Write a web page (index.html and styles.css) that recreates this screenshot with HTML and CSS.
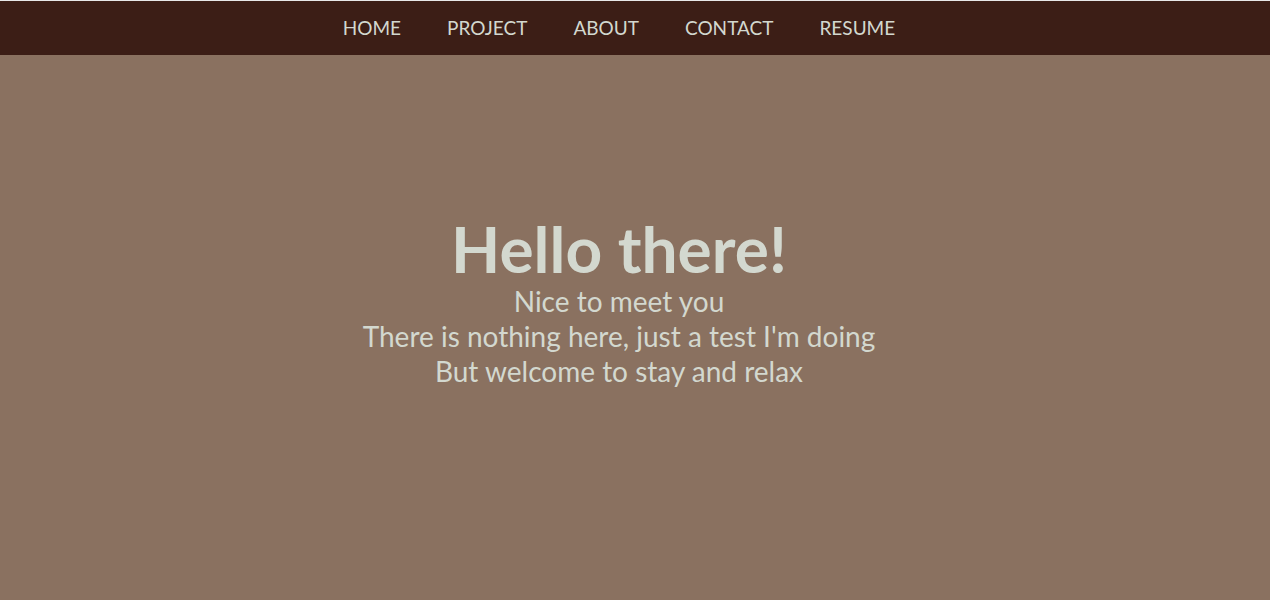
FILE: index.html
```html
<!DOCTYPE html>
<html>
<head>
<meta charset="utf-8">
<link rel="stylesheet" href="styles.css">
</head>
<body>
<nav class="nav">
  <a class="nav-link" href="#">HOME</a>
  <a class="nav-link" href="#">PROJECT</a>
  <a class="nav-link" href="#">ABOUT</a>
  <a class="nav-link" href="#">CONTACT</a>
  <a class="nav-link" href="#">RESUME</a>
</nav>
<main class="hero">
  <h1 class="hero-title">Hello there!</h1>
  <p class="hero-line">Nice to meet you</p>
  <p class="hero-line">There is nothing here, just a test I'm doing</p>
  <p class="hero-line">But welcome to stay and relax</p>
</main>
</body>
</html>
```
FILE: styles.css
```css
html, body {
  margin: 0;
  padding: 0;
  height: 100%;
}
body {
  background: #8a7160;
  font-family: Lato, "Open Sans", sans-serif;
  color: #d3d8cf;
  border-top: 1px solid #e8e8e8;
  box-sizing: border-box;
}
.nav {
  background: #3c1e16;
  height: 54px;
  box-sizing: border-box;
  padding-bottom: 2px;
  display: flex;
  justify-content: center;
  align-items: center;
  gap: 46px;
  padding-right: 32px;
}
.nav-link {
  color: #d3d8cf;
  text-decoration: none;
  font-size: 19px;
}
.hero {
  display: flex;
  flex-direction: column;
  align-items: center;
  padding-top: 159px;
  padding-right: 32px;
}
.hero-title {
  margin: 0;
  font-size: 64px;
  font-weight: 700;
  line-height: 70px;
}
.hero-line {
  margin: 0;
  font-size: 28px;
  line-height: 35px;
}
```
